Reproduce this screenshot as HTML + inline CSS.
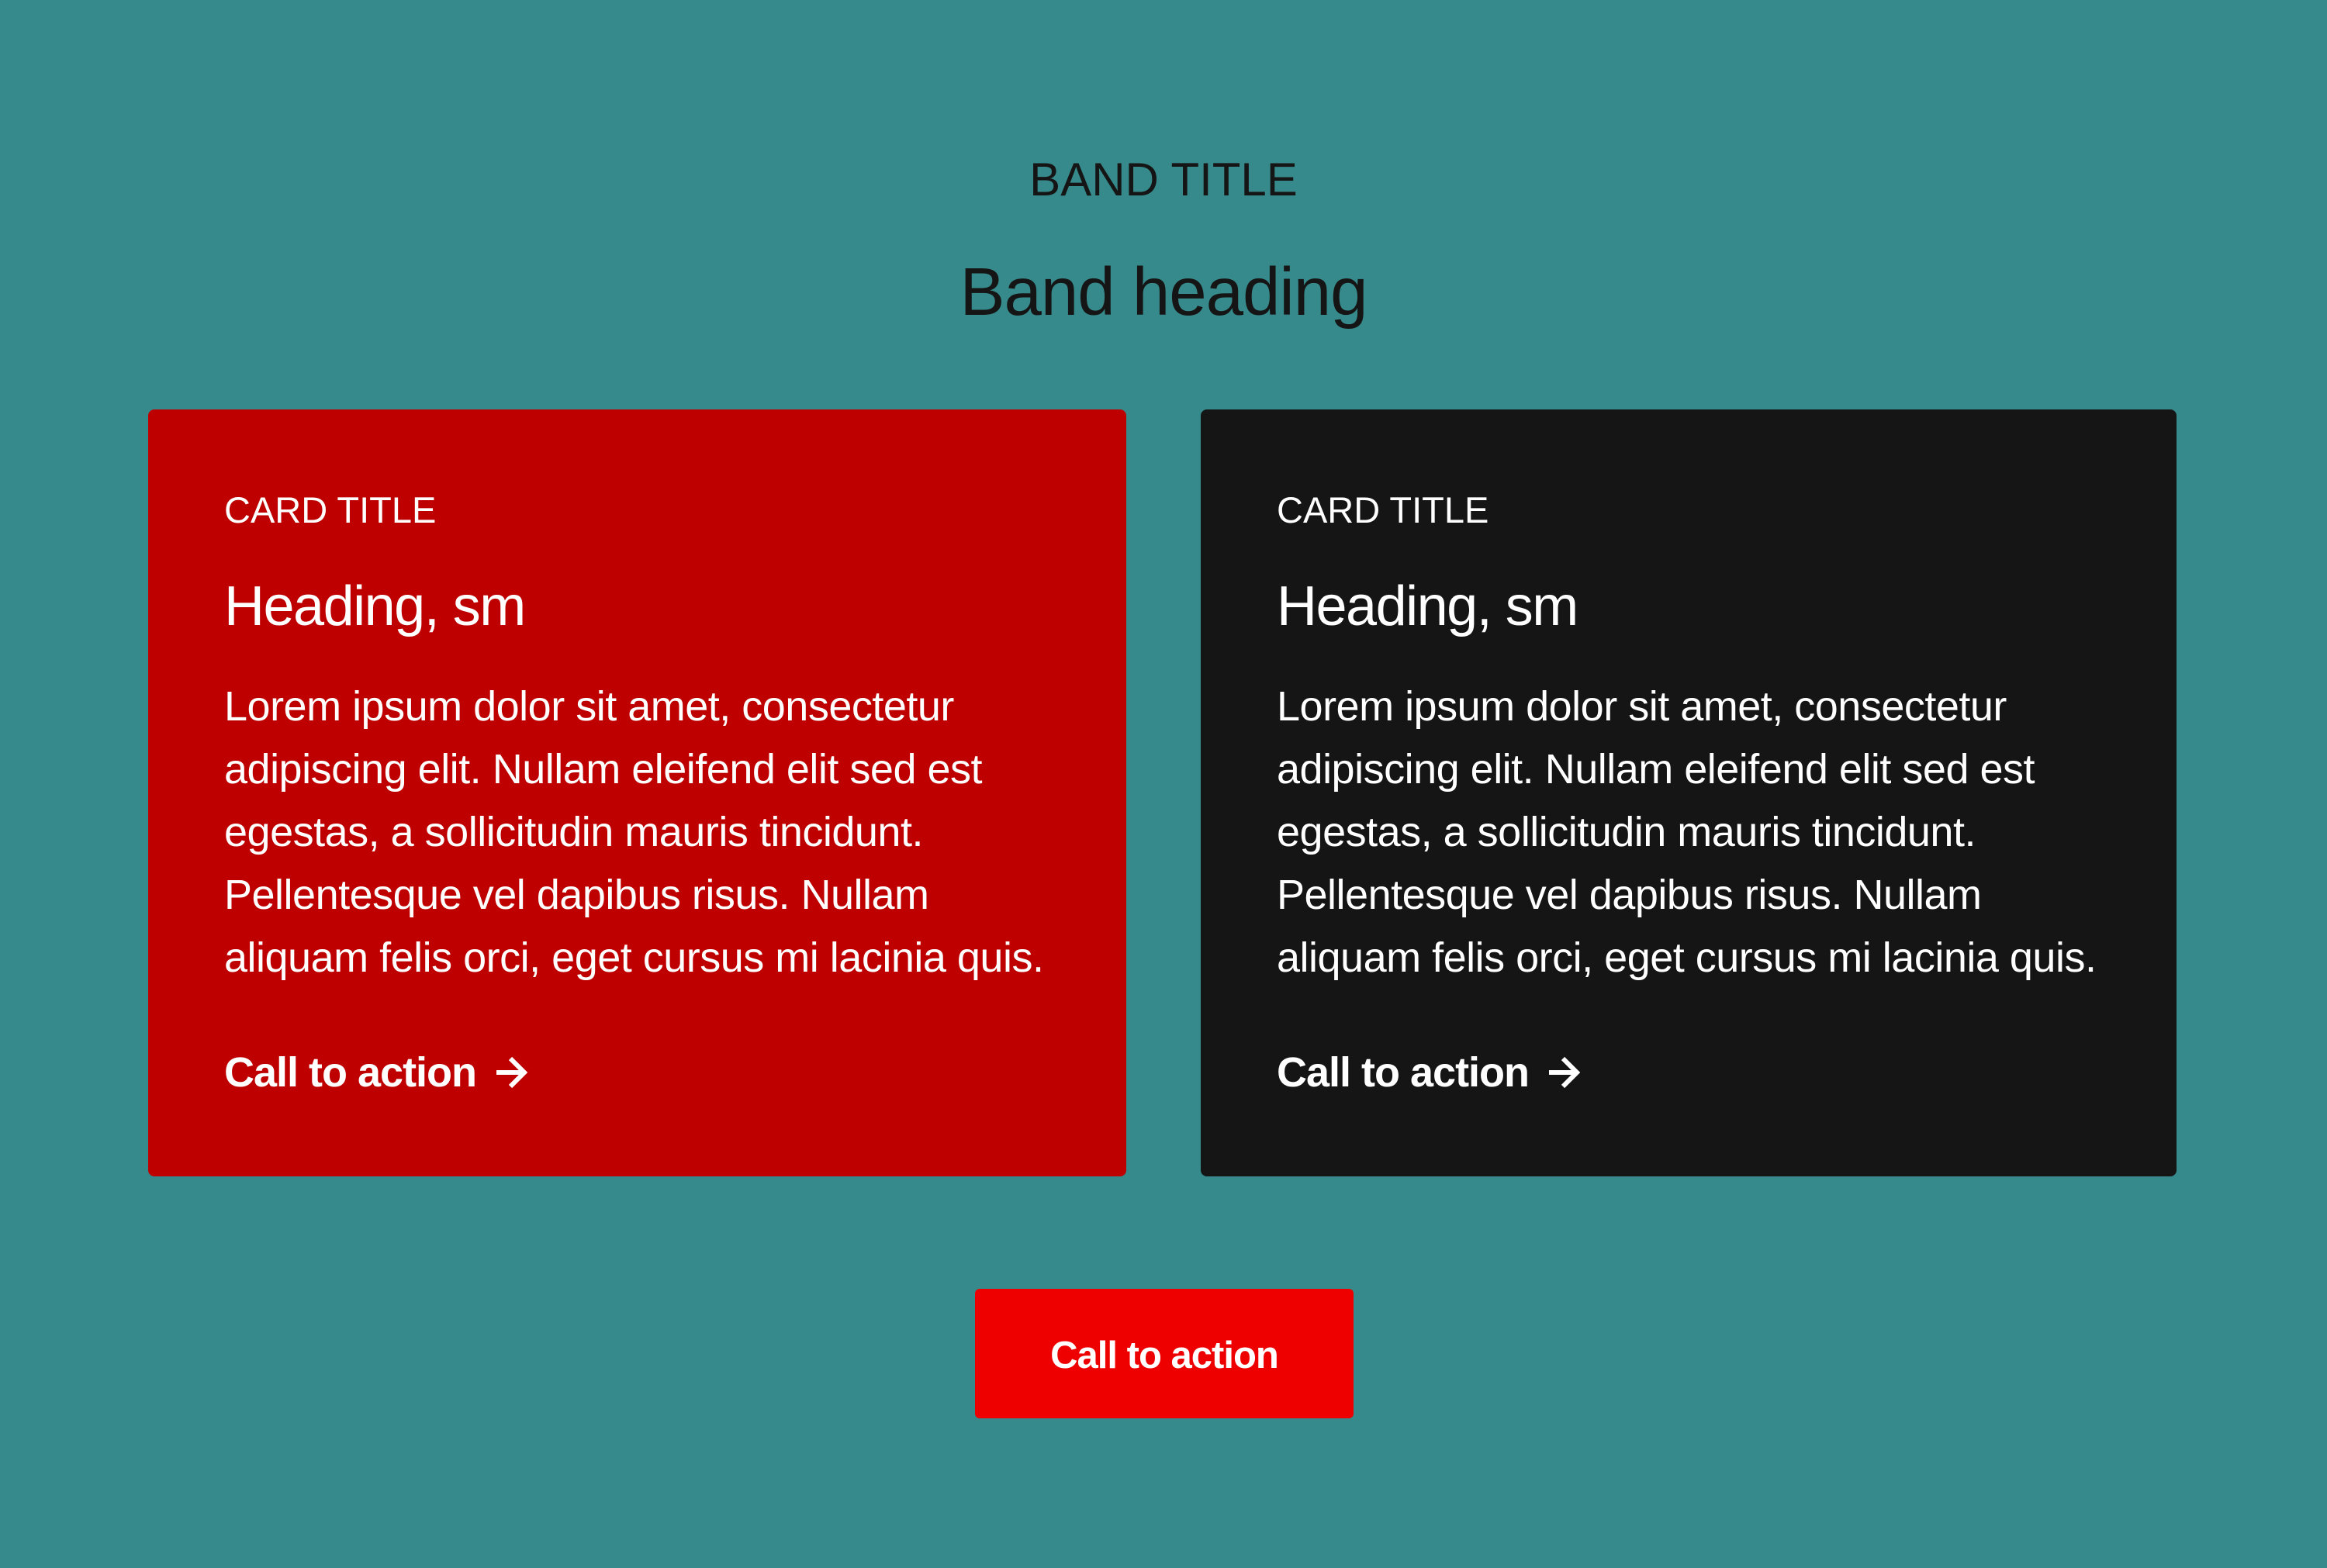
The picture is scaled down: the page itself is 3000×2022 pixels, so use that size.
<!DOCTYPE html>
<html><head><meta charset="utf-8"><style>
html,body{margin:0;padding:0}
body{width:3000px;height:2022px;background:#378a8b;position:relative;overflow:hidden;font-family:"Liberation Sans",sans-serif}
.a{position:absolute;line-height:1;white-space:nowrap}
.c{position:absolute;border-radius:8px}
.ct{left:98px;color:#fff}
</style></head><body>
<div class="a" style="left:0;width:3000px;text-align:center;top:202px;font-size:60px;color:#151515">BAND TITLE</div>
<div class="a" style="left:0;width:3000px;text-align:center;top:333px;font-size:87px;color:#151515;letter-spacing:-1px">Band heading</div>

<div class="c" style="left:191px;top:528px;width:1261px;height:989px;background:#be0000">
  <div class="a ct" style="top:106px;font-size:47px">CARD TITLE</div>
  <div class="a ct" style="top:218px;font-size:72px;letter-spacing:-1.5px">Heading, sm</div>
  <div class="a ct" style="top:343px;font-size:54px;line-height:81px;letter-spacing:-0.5px">Lorem ipsum dolor sit amet, consectetur<br>adipiscing elit. Nullam eleifend elit sed est<br>egestas, a sollicitudin mauris tincidunt.<br>Pellentesque vel dapibus risus. Nullam<br>aliquam felis orci, eget cursus mi lacinia quis.</div>
  <div class="a ct" style="top:828px;font-size:54px;font-weight:bold;letter-spacing:-1px">Call to action <svg width="46" height="44" viewBox="0 0 46 44" style="vertical-align:-4px;margin-left:8px"><path d="M4 22H40M22 4L40 22L22 40" stroke="#fff" stroke-width="6" fill="none"/></svg></div>
</div>

<div class="c" style="left:1548px;top:528px;width:1258px;height:989px;background:#151515">
  <div class="a ct" style="top:106px;font-size:47px">CARD TITLE</div>
  <div class="a ct" style="top:218px;font-size:72px;letter-spacing:-1.5px">Heading, sm</div>
  <div class="a ct" style="top:343px;font-size:54px;line-height:81px;letter-spacing:-0.5px">Lorem ipsum dolor sit amet, consectetur<br>adipiscing elit. Nullam eleifend elit sed est<br>egestas, a sollicitudin mauris tincidunt.<br>Pellentesque vel dapibus risus. Nullam<br>aliquam felis orci, eget cursus mi lacinia quis.</div>
  <div class="a ct" style="top:828px;font-size:54px;font-weight:bold;letter-spacing:-1px">Call to action <svg width="46" height="44" viewBox="0 0 46 44" style="vertical-align:-4px;margin-left:8px"><path d="M4 22H40M22 4L40 22L22 40" stroke="#fff" stroke-width="6" fill="none"/></svg></div>
</div>

<div class="c" style="left:1257px;top:1662px;width:488px;height:167px;background:#ee0000;border-radius:6px"></div>
<div class="a" style="left:1257px;width:488px;text-align:center;top:1724px;font-size:49px;font-weight:bold;color:#fff;letter-spacing:-1px">Call to action</div>
</body></html>
